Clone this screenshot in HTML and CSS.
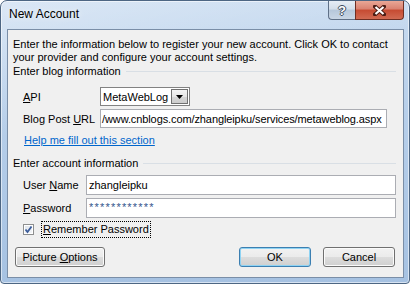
FILE: index.html
```html
<!DOCTYPE html>
<html lang="en">
  <head>
    <meta charset="UTF-8" />
    <title>New Account</title>
    <link rel="stylesheet" href="styles.css">
  </head>
  <body>
    <div class="window">
      <div class="titlebar">
        <span class="title">New Account</span>
        <div class="caption-buttons">
          <span class="cap-btn help">?</span>
          <span class="cap-btn close">
            <svg width="13" height="11" viewBox="0 0 13 11">
              <path d="M2 1.5 L11 9.5 M11 1.5 L2 9.5" stroke="#4a1c14" stroke-width="4" stroke-linecap="square" />
              <path d="M2.5 2 L10.5 9 M10.5 2 L2.5 9" stroke="#ffffff" stroke-width="2.2" />
            </svg>
          </span>
        </div>
      </div>

      <div class="client">
        <p class="intro">Enter the information below to register your new account. Click OK to contact your provider and configure your account settings.</p>

        <!-- blog -->
        <div class="group-title"><span>Enter blog information</span></div>
        <div class="row blog-row">
          <label class="label"><u>A</u>PI</label>
          <div class="combo">
            <span class="combo-text">MetaWebLog</span>
            <span class="combo-btn">
              <svg width="7" height="4" viewBox="0 0 7 4"><path d="M0 0 H7 L3.5 4 Z" fill="#000" /></svg>
            </span>
          </div>
        </div>
        <div class="row blog-row url-row">
          <label class="label">Blog Post <u>U</u>RL</label>
          <div class="field url-field"><span>/www.cnblogs.com/zhangleipku/services/metaweblog.aspx</span></div>
        </div>
        <a href="#" class="help-link">Help me fill out this section</a>

        <!-- account -->
        <div class="group-title account-title"><span>Enter account information</span></div>
        <div class="row account-row user-row">
          <label class="label">User <u>N</u>ame</label>
          <div class="field"><span>zhangleipku</span></div>
        </div>
        <div class="row account-row pass-row">
          <label class="label"><u>P</u>assword</label>
          <div class="field"><span class="secret">************</span></div>
        </div>
        <div class="check-row">
          <span class="checkbox">
            <svg width="11" height="11" viewBox="0 0 11 11">
              <path d="M2.5 5.5 L4.5 8 L8.5 2.5" stroke="#3b5c9a" stroke-width="1.8" fill="none" />
            </svg>
          </span>
          <span class="check-label"><u>R</u>emember Password</span>
        </div>

        <div class="buttons">
          <button class="btn picture-btn">Picture <u>O</u>ptions</button>
          <button class="btn ok-btn">OK</button>
          <button class="btn cancel-btn">Cancel</button>
        </div>
      </div>
    </div>
  </body>
</html>
```

FILE: styles.css
```css
body,
html {
  margin: 0;
  padding: 0;
  background-color: #ffffff;
  font-family: "Liberation Sans", Arial, sans-serif;
  font-size: 11px;
  color: #000;
}

.window {
  box-sizing: border-box;
  width: 410px;
  height: 284px;
  border: 1px solid #4d6683;
  border-radius: 7px 7px 4px 4px;
  background:
    linear-gradient(165deg, rgba(255, 255, 255, 0.35) 0%, rgba(255, 255, 255, 0) 35%),
    linear-gradient(to bottom, #c8dbf0 0%, #b7cfea 40%, #a6c2e2 100%);
  box-shadow: inset 0 0 0 1px rgba(255, 255, 255, 0.55);
}

/* 标题栏 */
.titlebar {
  display: flex;
  align-items: flex-start;
  height: 28px;
}

.title {
  margin: 6px 0 0 8px;
  font-size: 12px;
  line-height: 15px;
  text-shadow: 0 0 6px rgba(255, 255, 255, 0.9);
}

.caption-buttons {
  display: flex;
  margin-left: auto;
  margin-right: 5px;
}

.cap-btn {
  box-sizing: border-box;
  height: 19px;
  display: flex;
  justify-content: center;
  align-items: center;
}

.help {
  width: 27px;
  border: 1px solid #5f7087;
  border-top: none;
  border-right: none;
  border-radius: 0 0 0 4px;
  background: linear-gradient(to bottom, #e6edf5 0%, #d3deea 45%, #b6c7da 50%, #c9d6e5 100%);
  color: #ffffff;
  font-weight: bold;
  font-size: 13px;
  text-shadow: 1px 0 0 #3d4b5e, -1px 0 0 #3d4b5e, 0 1px 0 #3d4b5e, 0 -1px 0 #3d4b5e;
}

.close {
  width: 49px;
  border: 1px solid #6e2e22;
  border-top: none;
  border-radius: 0 0 4px 0;
  background: linear-gradient(to bottom, #e9a796 0%, #d98170 45%, #c64b32 50%, #d16a52 100%);
}

/* 主体 */
.client {
  box-sizing: border-box;
  height: 249px;
  margin: 0 5px 0 6px;
  padding-top: 8px;
  border: 1px solid #7a8ea7;
  background-color: #f0f0f0;
}

.intro {
  margin: 0;
  padding: 0 6px 0 5px;
  line-height: 13px;
}

.group-title {
  display: flex;
  align-items: center;
  height: 14px;
  line-height: 14px;
  padding: 0 7px 0 5px;
}

.group-title::after {
  content: "";
  flex: 1;
  height: 1px;
  margin-left: 5px;
  background-color: #d9dfe5;
}

.account-title {
  margin-top: 9px;
}

.row {
  display: flex;
  align-items: center;
  padding-left: 15px;
}

.label {
  flex-shrink: 0;
}

.blog-row {
  height: 19px;
  margin-top: 9px;
}

.blog-row .label {
  width: 77px;
}

.url-row {
  margin-top: 3px;
}

.account-row {
  height: 20px;
  margin-top: 5px;
}

.account-row .label {
  width: 63px;
}

.pass-row {
  margin-top: 3px;
}

.combo {
  box-sizing: border-box;
  display: flex;
  align-items: center;
  width: 90px;
  height: 19px;
  border: 1px solid #828282;
  background-color: #fff;
}

.combo-text {
  flex: 1;
  padding-left: 2px;
}

.combo-btn {
  box-sizing: border-box;
  display: flex;
  justify-content: center;
  align-items: center;
  width: 17px;
  height: 15px;
  margin-right: 1px;
  border: 1px solid #707070;
  background: linear-gradient(to bottom, #f4f4f4 0%, #e6e6e6 50%, #d6d6d6 51%, #cdcdcd 100%);
}

.field {
  box-sizing: border-box;
  display: flex;
  align-items: center;
  width: 310px;
  height: 20px;
  padding-left: 2px;
  border: 1px solid #abadb3;
  background-color: #fff;
  overflow: hidden;
  white-space: nowrap;
}

.url-field {
  width: 287px;
  height: 19px;
  padding-left: 1px;
  letter-spacing: -0.1px;
}

.secret {
  color: #33558c;
  letter-spacing: 1.2px;
  line-height: 10px;
  margin-top: -3px;
}

.help-link {
  display: block;
  margin: 5px 0 0 16px;
  line-height: 14px;
  color: #0066cc;
  text-decoration: underline;
  width: max-content;
}

.check-row {
  display: flex;
  align-items: center;
  height: 17px;
  margin-top: 3px;
  padding-left: 15px;
}

.checkbox {
  box-sizing: border-box;
  display: flex;
  width: 11px;
  height: 11px;
  border: 1px solid #8e8f8f;
  background: linear-gradient(135deg, #dde3ea 0%, #f6f7f9 100%);
  box-shadow: inset 0 0 0 1px #fff;
}

.checkbox svg {
  margin: -1px;
}

.check-label {
  margin-left: 7px;
  padding: 1px 1px;
  border: 1px dotted #000;
  line-height: 13px;
}

/* 按钮 */
.buttons {
  display: flex;
  margin-top: 9px;
  padding: 0 8px 0 7px;
}

.btn {
  box-sizing: border-box;
  height: 20px;
  width: 72px;
  padding: 0;
  border: 1px solid #707070;
  border-radius: 3px;
  background: linear-gradient(to bottom, #f2f2f2 0%, #ebebeb 49%, #dddddd 50%, #cfcfcf 100%);
  box-shadow: inset 0 0 0 1px #fbfbfb;
  font-family: "Liberation Sans", Arial, sans-serif;
  font-size: 11px;
  color: #000;
}

.picture-btn {
  width: 90px;
}

.ok-btn {
  margin-left: auto;
  border-color: #3c7fb1;
  box-shadow: inset 0 0 0 1px #8fd3f3;
}

.cancel-btn {
  margin-left: 12px;
}
```
